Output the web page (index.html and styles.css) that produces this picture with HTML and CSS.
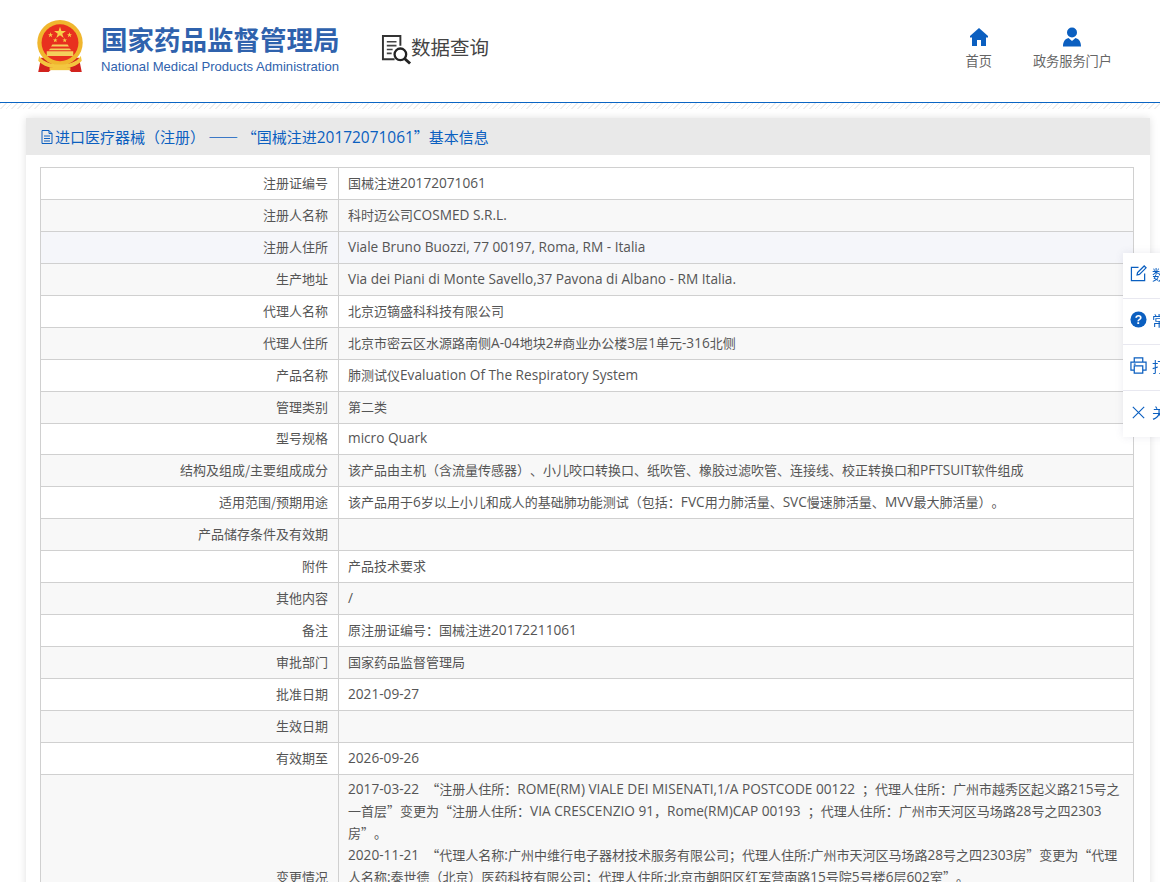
FILE: index.html
```html
<!DOCTYPE html>
<html lang="zh-CN">
<head>
<meta charset="utf-8">
<title>数据查询</title>
<link rel="stylesheet" href="styles.css">
</head>
<body>
<header class="top">
  <div class="brand">
    <svg class="emblem" viewBox="0 0 50 56" aria-hidden="true">
      <path d="M5 40h40l3 15H37l-3-3H16l-3 3H2z" fill="#d2231e"/>
      <circle cx="25" cy="24" r="24" fill="#f0b62e"/>
      <circle cx="25" cy="24" r="19.5" fill="#e8301f"/>
      <path d="M25 7l1.500 4.600h4.800l-3.900 2.800 1.500 4.600-3.900-2.800-3.900 2.800 1.500-4.600-3.900-2.800h4.800z" fill="#f7d24a"/>
      <path d="M15 13l.7 2h2l-1.600 1.200.6 2-1.700-1.200-1.700 1.200.6-2-1.600-1.200h2zM35 13l.7 2h2l-1.600 1.200.6 2-1.700-1.200-1.700 1.200.6-2-1.600-1.200h2zM20 19l.6 1.700h1.800l-1.400 1 .5 1.700-1.500-1-1.500 1 .5-1.700-1.400-1h1.800zM30 19l.6 1.700h1.800l-1.400 1 .5 1.700-1.500-1-1.500 1 .5-1.700-1.400-1h1.800z" fill="#f7d24a"/>
      <path d="M15 30h20l2 2H13zM17 26h16l1.500 2h-19zM11 33h28v5H11z" fill="#f4cf5c"/>
      <path d="M3 38c5 7 13 9 22 9s17-2 22-9l1 5c-5 6-14 8-23 8S7 49 2 43z" fill="#f3c63f"/>
      <path d="M14 50h22v3H14z" fill="#f3c63f"/>
    </svg>
    <div class="brand-text">
      <div class="brand-cn">国家药品监督管理局</div>
      <div class="brand-en">National Medical Products Administration</div>
    </div>
    <div class="query">
      <svg class="query-icon" viewBox="0 0 32 32" aria-hidden="true">
        <path d="M14 26H2V2h18v10" fill="none" stroke="#333" stroke-width="2"/>
        <path d="M6 8h10M6 12h10M6 16h6M6 20h5" stroke="#444" stroke-width="1.600"/>
        <circle cx="20" cy="21" r="6" fill="none" stroke="#222" stroke-width="2.400"/>
        <path d="M24.500 25.500L30 30.500" stroke="#222" stroke-width="3"/>
      </svg>
      <span class="query-text">数据查询</span>
    </div>
  </div>
  <nav class="nav">
    <a class="nav-item nav-home">
      <svg class="nav-icon" viewBox="0 0 20 20" aria-hidden="true"><path d="M10 1L1 9v1.500h2V19h5v-6h4v6h5v-8.500h2V9z" fill="#0b5fc0"/></svg>
      <span>首页</span>
    </a>
    <a class="nav-item nav-portal">
      <svg class="nav-icon" viewBox="0 0 20 20" aria-hidden="true"><circle cx="10" cy="5.500" r="5" fill="#0b5fc0"/><path d="M1 19.500c0-5 2-7.500 5.500-8.500L10 14l3.500-3c3.500 1 5.500 3.500 5.500 8.500z" fill="#0b5fc0"/></svg>
      <span>政务服务门户</span>
    </a>
  </nav>
</header>
<div class="hatch"></div>
<main class="card">
  <h2 class="card-title">
    <svg class="doc-icon" viewBox="0 0 12 14" aria-hidden="true"><path d="M1 .5h7l3 3v10H1zM8 .5v3h3M3 6h6M3 8.500h6M3 11h6" fill="none" stroke="#0b5fc0"/></svg>
    <span>进口医疗器械（注册） —— “国械注进<span class="l">20172071061</span>”基本信息</span>
  </h2>
  <div class="card-body">
    <table class="info">
      <colgroup><col class="col-label"><col></colgroup>
      <tbody>
        <tr><th>注册证编号</th><td>国械注进<span class="l">20172071061</span></td></tr>
        <tr><th>注册人名称</th><td>科时迈公司<span class="l">COSMED S.R.L.</span></td></tr>
        <tr class="hover"><th>注册人住所</th><td><span class="l">Viale Bruno Buozzi, 77 00197, Roma, RM - Italia</span></td></tr>
        <tr><th>生产地址</th><td><span class="l">Via dei Piani di Monte Savello,37 Pavona di Albano - RM Italia.</span></td></tr>
        <tr><th>代理人名称</th><td>北京迈镝盛科科技有限公司</td></tr>
        <tr><th>代理人住所</th><td>北京市密云区水源路南侧<span class="l">A-04</span>地块<span class="l">2#</span>商业办公楼<span class="l">3</span>层<span class="l">1</span>单元<span class="l">-316</span>北侧</td></tr>
        <tr><th>产品名称</th><td>肺测试仪<span class="l">Evaluation Of The Respiratory System</span></td></tr>
        <tr><th>管理类别</th><td>第二类</td></tr>
        <tr><th>型号规格</th><td><span class="l">micro Quark</span></td></tr>
        <tr><th>结构及组成/主要组成成分</th><td>该产品由主机（含流量传感器）、小儿咬口转换口、纸吹管、橡胶过滤吹管、连接线、校正转换口和<span class="l">PFTSUIT</span>软件组成</td></tr>
        <tr><th>适用范围/预期用途</th><td>该产品用于<span class="l">6</span>岁以上小儿和成人的基础肺功能测试（包括<span class="c">：</span><span class="l">FVC</span>用力肺活量、<span class="l">SVC</span>慢速肺活量、<span class="l">MVV</span>最大肺活量）。</td></tr>
        <tr><th>产品储存条件及有效期</th><td></td></tr>
        <tr><th>附件</th><td>产品技术要求</td></tr>
        <tr><th>其他内容</th><td><span class="l">/</span></td></tr>
        <tr><th>备注</th><td>原注册证编号<span class="c">：</span>国械注进<span class="l">20172211061</span></td></tr>
        <tr><th>审批部门</th><td>国家药品监督管理局</td></tr>
        <tr><th>批准日期</th><td><span class="l">2021-09-27</span></td></tr>
        <tr><th>生效日期</th><td></td></tr>
        <tr><th>有效期至</th><td><span class="l">2026-09-26</span></td></tr>
        <tr class="tall"><th>变更情况</th><td class="long"><span class="l">2017-03-22&nbsp; </span>“注册人住所<span class="c">：</span><span class="l">ROME(RM) VIALE DEI MISENATI,1/A POSTCODE 00122&nbsp; </span>；代理人住所<span class="c">：</span>广州市越秀区起义路<span class="l">215</span>号之一首层”变更为“注册人住所<span class="c">：</span><span class="l">VIA CRESCENZIO 91</span>，<span class="l">Rome(RM)CAP 00193&nbsp; </span>；代理人住所<span class="c">：</span>广州市天河区马场路<span class="l">28</span>号之四<span class="l">2303</span>房”。<br><span class="l">2020-11-21&nbsp; </span>“代理人名称<span class="l">:</span>广州中维行电子器材技术服务有限公司；代理人住所<span class="l">:</span>广州市天河区马场路<span class="l">28</span>号之四<span class="l">2303</span>房”变更为“代理人名称<span class="l">:</span>泰世德（北京）医药科技有限公司；代理人住所<span class="l">:</span>北京市朝阳区红军营南路<span class="l">15</span>号院<span class="l">5</span>号楼<span class="l">6</span>层<span class="l">602</span>室”。</td></tr>
      </tbody>
    </table>
  </div>
</main>
<aside class="side">
  <div class="side-item">
    <svg class="side-icon" viewBox="0 0 18 18" aria-hidden="true"><path d="M9 2.500H1.500v14h14V9M7.500 10.500l.5-2.500 7-7 2 2-7 7z" fill="none" stroke="#0b5fc0" stroke-width="1.300"/></svg><span>数据</span>
  </div>
  <div class="side-item">
    <svg class="side-icon" viewBox="0 0 18 18" aria-hidden="true"><circle cx="9" cy="9" r="8.500" fill="#0b5fc0"/><text x="9" y="13.500" class="q-mark">?</text></svg><span>常见</span>
  </div>
  <div class="side-item">
    <svg class="side-icon" viewBox="0 0 18 18" aria-hidden="true"><path d="M4.500 5V1h9v4M4.500 14H1V5.500h16V14h-3.500M4.500 9.500h9V17h-9zM4 7.500h2" fill="none" stroke="#0b5fc0" stroke-width="1.300"/></svg><span>打印</span>
  </div>
  <div class="side-item">
    <svg class="side-icon" viewBox="0 0 18 18" aria-hidden="true"><path d="M3 3l12 12M15 3L3 15" fill="none" stroke="#0b5fc0" stroke-width="1.200"/></svg><span>关闭</span>
  </div>
</aside>
</body>
</html>
```
FILE: styles.css
```css
* { box-sizing: border-box; }
html, body { margin: 0; height: 882px; overflow: hidden; background: #fff; }
body { font-family: "Noto Sans CJK SC", sans-serif; font-size: 13px; color: #555; text-spacing-trim: space-all; }
.l { font-family: "Open Sans", sans-serif; font-size: 1.05em; }
.c { font-family: "Noto Sans CJK TC", sans-serif; }

.top { height: 103px; display: flex; justify-content: space-between; border-bottom: 1px solid #0a65c4; }
.brand { display: flex; align-items: flex-start; padding: 20px 0 0 36px; }
.emblem { width: 48px; height: 53px; margin-right: 17px; }
.brand-text { width: 240px; padding-top: 3px; }
.brand-cn { font-size: 26.500px; font-weight: 700; line-height: 32px; color: #2f62ad; white-space: nowrap; }
.brand-en { font-family: "Liberation Sans", sans-serif; font-size: 13.100px; line-height: 16px; margin-top: 4px; color: #2f62ad; white-space: nowrap; }
.query { display: flex; align-items: center; margin: 14px 0 0 40px; }
.query-icon { width: 31px; height: 31px; }
.query-text { font-size: 19.500px; line-height: 28px; color: #444; margin: -5px 0 0 -1px; }

.nav { display: flex; padding: 27px 48px 0 0; }
.nav-item { display: flex; flex-direction: column; align-items: center; font-size: 13.200px; line-height: 18px; color: #666; }
.nav-icon { width: 20px; height: 20px; margin-bottom: 5px; }
.nav-home { margin-right: 41px; }

.hatch { height: 6px; background: repeating-linear-gradient(135deg, #eeeeee 0 1px, #fff 1px 4px); }

.card { margin: 9px 10px 0 26px; background: #fff; box-shadow: 0 0 8px rgba(0, 0, 0, .12); }
.card-title { display: flex; align-items: center; margin: 0; height: 37px; padding-left: 15px; background: #e9e9e9; font-size: 15px; font-weight: 400; color: #0b5fc0; white-space: nowrap; }
.card-title .l { font-size: 1.030em; }
.doc-icon { width: 12px; height: 14px; margin-right: 2px; flex: none; }
.card-body { padding: 12px 16px 0 14px; }

.info { width: 100%; border-collapse: collapse; table-layout: fixed; border: 1px solid #d0d0d0; }
.col-label { width: 298px; }
.info th, .info td { height: 31.950px; padding: 0 9px 1px; border: 1px solid #d0d0d0; font-weight: 400; line-height: 22px; font-size: 13px; color: #555; }
.info th { text-align: right; padding-right: 10px; }
.info td { text-align: left; }
.info tr:nth-child(even) { background: #f8f8f8; }
.info tr.hover { background: #f5f6fa; }
.info tr.tall th, .info tr.tall td { height: 206px; }
.info td.long { padding: 3px 9px; vertical-align: top; }

.side { position: fixed; left: 1123px; top: 253px; width: 90px; background: #fff; box-shadow: 0 0 8px rgba(90, 90, 140, .12); }
.side-item { display: flex; align-items: center; height: 46px; padding: 0 0 4px 7px; border-bottom: 1px solid #e8e8f0; color: #0b5fc0; font-size: 14px; white-space: nowrap; }
.side-item:last-child { border-bottom: 0; }
.side-icon { width: 17px; height: 17px; margin-right: 5px; flex: none; }
.q-mark { font-family: "Liberation Sans", sans-serif; font-size: 13px; font-weight: 700; text-anchor: middle; fill: #fff; }
```
